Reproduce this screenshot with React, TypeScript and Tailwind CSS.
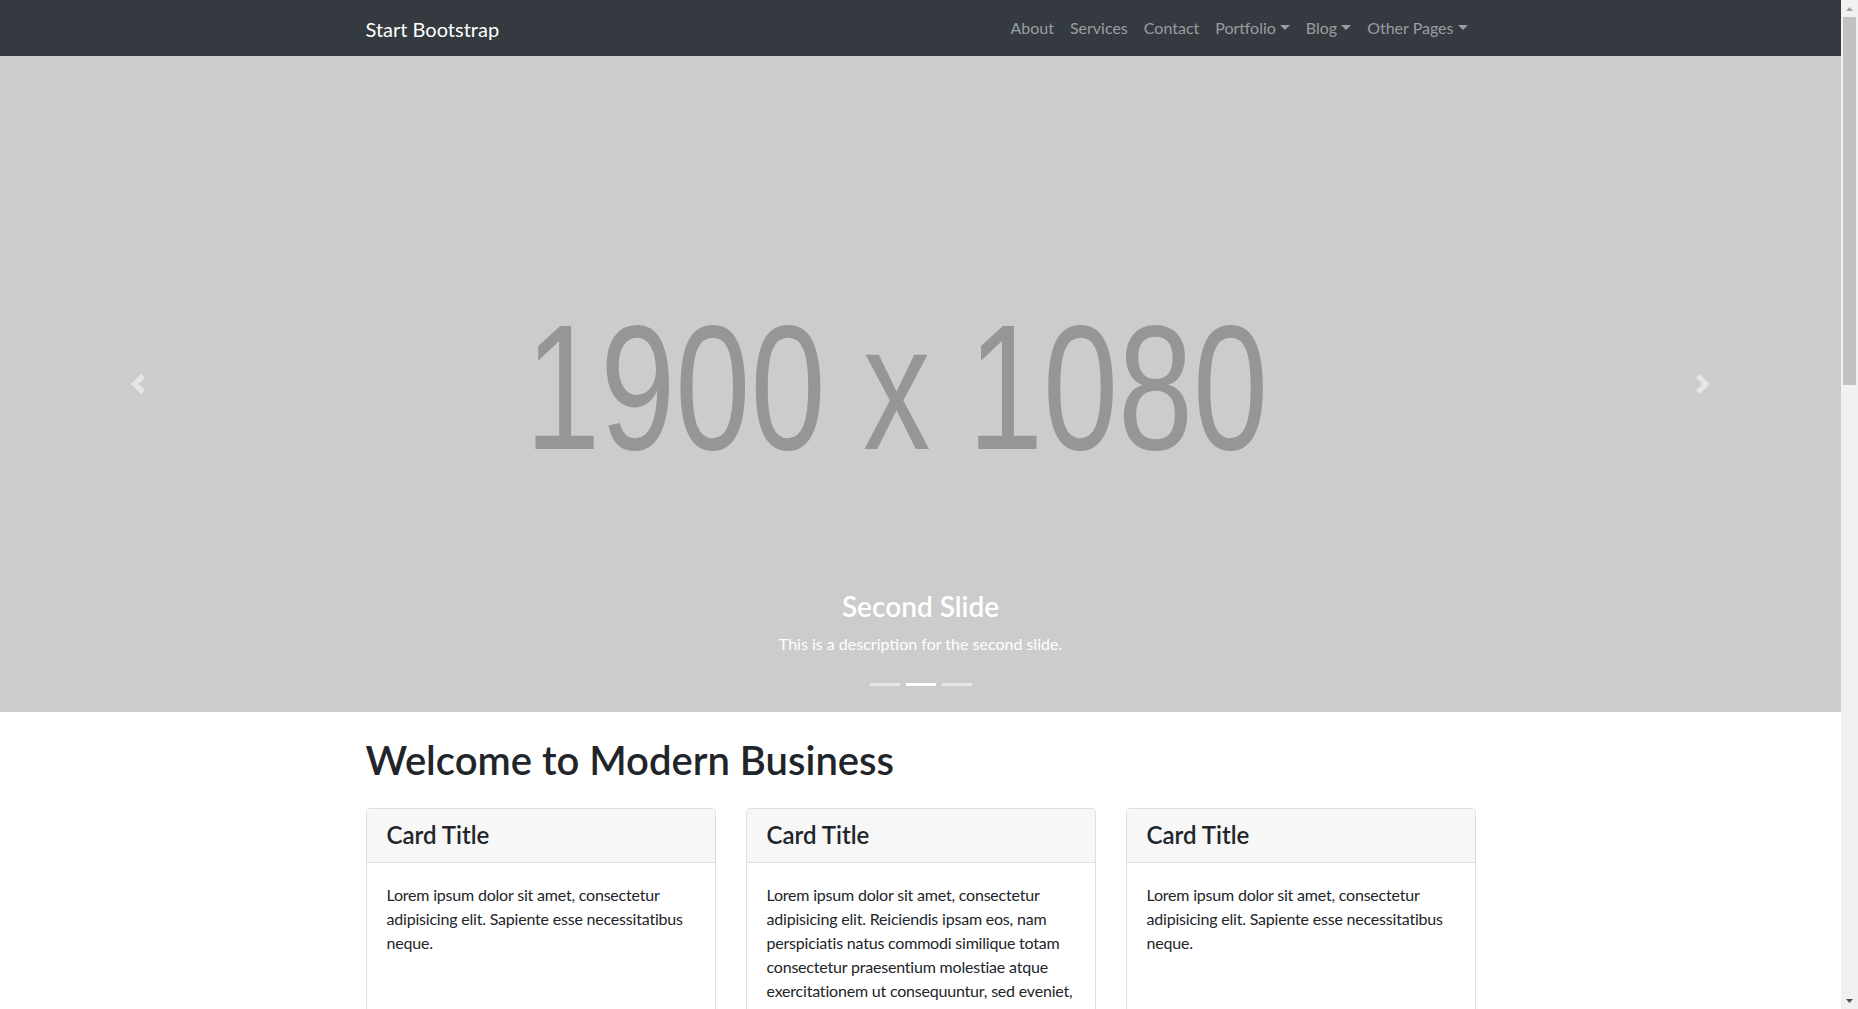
import React from "react";

const navLinks = [
  {label: "About", dropdown: false},
  {label: "Services", dropdown: false},
  {label: "Contact", dropdown: false},
  {label: "Portfolio", dropdown: true},
  {label: "Blog", dropdown: true},
  {label: "Other Pages", dropdown: true},
];

const cards = [
  "Lorem ipsum dolor sit amet, consectetur adipisicing elit. Sapiente esse necessitatibus neque.",
  "Lorem ipsum dolor sit amet, consectetur adipisicing elit. Reiciendis ipsam eos, nam perspiciatis natus commodi similique totam consectetur praesentium molestiae atque exercitationem ut consequuntur, sed eveniet, magni nostrum sint fuga.",
  "Lorem ipsum dolor sit amet, consectetur adipisicing elit. Sapiente esse necessitatibus neque.",
];

const projects = ["Project One", "Project Two", "Project Three", "Project Four", "Project Five", "Project Six"];

const Caret = () => (
  <span className="ml-[4px] inline-block h-0 w-0 align-[4px] border-t-[5px] border-r-[5px] border-l-[5px] border-b-0 border-t-[#9a9da0] border-r-transparent border-l-transparent"/>
);

const Navbar = () => (
  <nav className="bg-[#343a40] py-2">
    <div className="mx-auto flex max-w-[1140px] items-center justify-between px-[15px]">
      <a className="pt-[6px] pb-[4px] text-[20px] leading-[30px] text-white">Start Bootstrap</a>
      <ul className="flex">
        {navLinks.map((l) => (
          <li key={l.label}>
            <a className="block px-2 pt-[8px] pb-[8px] text-base leading-6 text-[#9a9da0]">
              {l.label}
              {l.dropdown && <Caret/>}
            </a>
          </li>
        ))}
      </ul>
    </div>
  </nav>
);

const Carousel = () => (
  <header className="relative h-[65vh] overflow-hidden bg-[#cccccc]">
    {/* placeholder image text */}
    <div className="flex h-full items-center justify-center">
      <span className="translate-x-[-24px] translate-y-[4px] scale-x-[0.754] whitespace-pre font-['Liberation_Sans',Arial,sans-serif] text-[179px] leading-none text-[#969696]">
        1900 x 1080
      </span>
    </div>

    <div className="absolute right-[15%] bottom-5 left-[15%] py-5 text-center text-white">
      <h3 className="mb-2 text-[28px] font-semibold leading-[1.2]">Second Slide</h3>
      <p className="mb-4 text-base leading-6">This is a description for the second slide.</p>
    </div>

    <ol className="absolute right-0 bottom-0 left-0 mb-4 flex justify-center">
      {[0, 1, 2].map((i) => (
        <li key={i} className={`mx-[3px] my-[10px] h-[3px] w-[30px] bg-white ${i === 1 ? "opacity-100" : "opacity-50"}`}/>
      ))}
    </ol>

    <a className="absolute top-0 bottom-0 left-0 flex w-[15%] items-center justify-center opacity-50">
      <svg width="20" height="20" viewBox="0 0 8 8" fill="#fff">
        <path d="M5.25 0l-4 4 4 4 1.5-1.5L4.25 4l2.5-2.5L5.25 0z"/>
      </svg>
    </a>
    <a className="absolute top-0 right-0 bottom-0 flex w-[15%] items-center justify-center opacity-50">
      <svg width="20" height="20" viewBox="0 0 8 8" fill="#fff">
        <path d="M2.75 0l-1.5 1.5L3.75 4l-2.5 2.5L2.75 8l4-4-4-4z"/>
      </svg>
    </a>
  </header>
);

const InfoCard = ({text}: { text: string }) => (
  <div className="flex h-full flex-col rounded-[4px] border border-[#dfdfdf] bg-white">
    <h4 className="rounded-t-[3px] border-b border-[#dfdfdf] bg-[#f7f7f7] px-5 py-3 text-[24px] font-semibold leading-[1.2]">
      Card Title
    </h4>
    <div className="flex-1 p-5">
      <p className="text-base leading-6 tracking-[-0.2px]">{text}</p>
    </div>
    <div className="border-t border-[#dfdfdf] bg-[#f7f7f7] px-5 py-3">
      <a className="inline-block rounded-[4px] bg-[#007bff] px-3 py-1.5 text-base leading-6 text-white">Learn More</a>
    </div>
  </div>
);

// drawn classic scrollbar (page is scrolled to top)
const Scrollbar = () => (
  <div className="flex w-[17px] shrink-0 flex-col bg-[#f1f1f1]">
    <div className="flex h-[17px] items-center justify-center">
      <svg width="7" height="4" viewBox="0 0 7 4"><path d="M3.5 0L7 4H0z" fill="#a3a3a3"/></svg>
    </div>
    <div className="mx-[2px] h-[368px] bg-[#c1c1c1]"/>
    <div className="flex-1"/>
    <div className="flex h-[17px] items-center justify-center">
      <svg width="7" height="4" viewBox="0 0 7 4"><path d="M0 0h7L3.5 4z" fill="#505050"/></svg>
    </div>
  </div>
);

export default function App() {
  return (
    <div className="flex h-screen overflow-hidden bg-white font-['Lato','Liberation_Sans',sans-serif] text-[#212529]">
      <div className="min-w-0 flex-1 overflow-hidden">
        <Navbar/>
        <Carousel/>

        <div className="mx-auto max-w-[1140px] px-[15px]">
          <h1 className="my-6 text-[40px] font-semibold leading-[1.2]">
            Welcome to Modern Business
          </h1>

          <div className="grid grid-cols-3 gap-[30px]">
            {cards.map((t, i) => (
              <div key={i} className="mb-6">
                <InfoCard text={t}/>
              </div>
            ))}
          </div>

          {/* Portfolio section */}
          <h2 className="mb-2 text-[32px] font-semibold leading-[1.2]">Portfolio Heading</h2>
          <div className="grid grid-cols-3 gap-[30px]">
            {projects.map((p) => (
              <div key={p} className="mb-6 rounded-[4px] border border-[#dfdfdf]">
                <div className="h-[233px] rounded-t-[3px] bg-[#cccccc]"/>
                <div className="p-5">
                  <h4 className="mb-3 text-[24px] font-semibold leading-[1.2] text-[#007bff]">{p}</h4>
                  <p className="leading-6">Lorem ipsum dolor sit amet, consectetur adipisicing elit. Amet numquam aspernatur eum quasi sapiente nesciunt?</p>
                </div>
              </div>
            ))}
          </div>
        </div>
      </div>
      <Scrollbar/>
    </div>
  );
}
